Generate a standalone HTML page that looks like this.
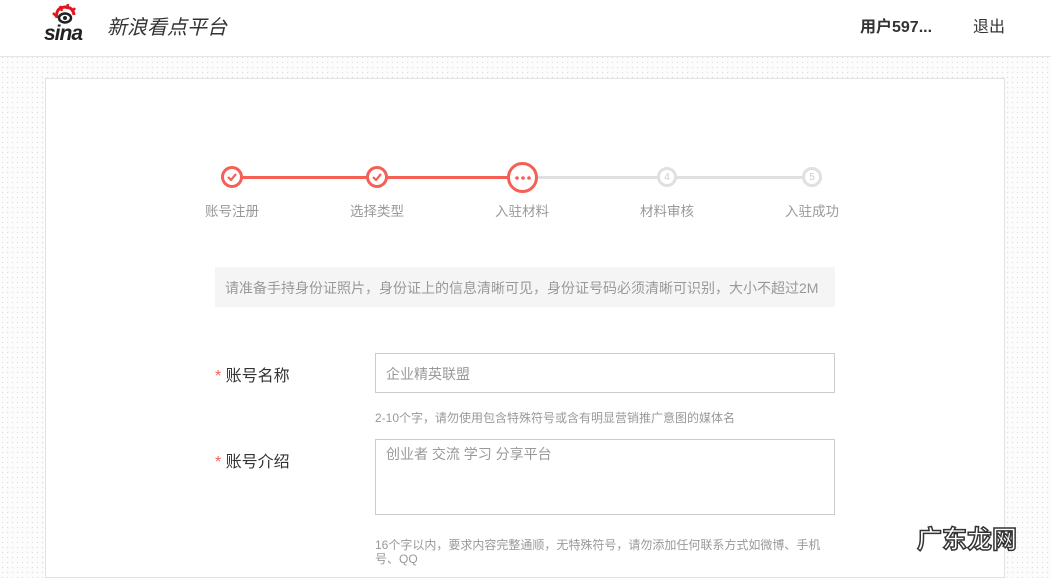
<!DOCTYPE html>
<html><head><meta charset="utf-8"><style>
*{margin:0;padding:0;box-sizing:border-box}
body{width:1051px;height:565px;overflow:hidden;font-family:"Liberation Sans","Noto Sans CJK SC",sans-serif;background-color:#fcfcfc;background-image:radial-gradient(#dddddd 0.7px,transparent 0.8px);background-size:5px 5px;position:relative}
.hdr{position:absolute;left:0;top:0;width:1051px;height:57px;background:#fff;border-bottom:1px solid #e6e6e6}
.abs{position:absolute;white-space:nowrap}
.card{position:absolute;left:45px;top:78px;width:960px;height:500px;background:#fff;border:1px solid #e2e2e2}
.c{position:absolute;border-radius:50%;background:#fff;display:flex;align-items:center;justify-content:center}
.line{position:absolute;height:3px}
.lbl{position:absolute;top:200px;font-size:13.5px;color:#999;width:100px;text-align:center}
.in{position:absolute;border:1px solid #ccc;background:#fff;font-size:14px;color:#999;padding-left:10px}
</style></head><body>
<div class="hdr">
<svg class="abs" style="left:44px;top:3px" width="56" height="40" viewBox="0 0 56 40">
<path d="M13 15 Q11 5 21 4 Q29 4 30 12" stroke="#e3141d" stroke-width="3" fill="none"/>
<path d="M9 10 L13 14 M16 3 L18 8 M24 1 L23 6 M31 5 L28 9" stroke="#e3141d" stroke-width="2.5"/>
<ellipse cx="21" cy="15" rx="6" ry="4.5" fill="#fff" stroke="#222" stroke-width="2.5"/>
<circle cx="21" cy="15" r="2" fill="#222"/>
<text x="0" y="37" font-family="Liberation Sans" font-style="italic" font-weight="bold" font-size="21" fill="#222" letter-spacing="-1">sina</text>
</svg>
<div class="abs" style="left:107px;top:11px;font-size:20px;color:#333;font-style:italic">新浪看点平台</div>
<div class="abs" style="left:860px;top:13px;font-size:16px;font-weight:bold;color:#333">用户597...</div>
<div class="abs" style="left:973px;top:13px;font-size:16px;color:#333">退出</div>
</div>
<div class="card"></div>
<div class="line" style="left:242px;top:176px;width:270px;background:#f55f55"></div>
<div class="line" style="left:537px;top:176px;width:265px;background:#e0e0e0"></div>
<div class="c" style="left:221px;top:166px;width:22px;height:22px;border:3px solid #f55f55"><svg width="10" height="8" viewBox="0 0 10 8"><path d="M1 4 L4 7 L9 1" stroke="#f55f55" stroke-width="2.2" fill="none"/></svg></div>
<div class="c" style="left:366px;top:166px;width:22px;height:22px;border:3px solid #f55f55"><svg width="10" height="8" viewBox="0 0 10 8"><path d="M1 4 L4 7 L9 1" stroke="#f55f55" stroke-width="2.2" fill="none"/></svg></div>
<div class="c" style="left:507px;top:162px;width:31px;height:31px;border:3px solid #f55f55"><svg width="16" height="4" viewBox="0 0 16 4"><circle cx="2" cy="2" r="1.8" fill="#f55f55"/><circle cx="8" cy="2" r="1.8" fill="#f55f55"/><circle cx="14" cy="2" r="1.8" fill="#f55f55"/></svg></div>
<div class="c" style="left:657px;top:167px;width:20px;height:20px;border:3px solid #e0e0e0;color:#ccc;font-size:10px">4</div>
<div class="c" style="left:802px;top:167px;width:20px;height:20px;border:3px solid #e0e0e0;color:#ccc;font-size:10px">5</div>
<div class="lbl" style="left:182px">账号注册</div>
<div class="lbl" style="left:327px">选择类型</div>
<div class="lbl" style="left:472px">入驻材料</div>
<div class="lbl" style="left:617px">材料审核</div>
<div class="lbl" style="left:762px">入驻成功</div>
<div class="abs" style="left:215px;top:267px;width:620px;height:40px;background:#f5f5f5;color:#999;font-size:14px;padding:11px 0 0 10px">请准备手持身份证照片，身份证上的信息清晰可见，身份证号码必须清晰可识别，大小不超过2M</div>
<div class="abs" style="left:215px;top:362px;font-size:16px;color:#333"><span style="color:#f55f55">*</span> 账号名称</div>
<div class="in" style="left:375px;top:353px;width:460px;height:40px;line-height:40px">企业精英联盟</div>
<div class="abs" style="left:375px;top:409px;font-size:12px;color:#999">2-10个字，请勿使用包含特殊符号或含有明显营销推广意图的媒体名</div>
<div class="abs" style="left:215px;top:448px;font-size:16px;color:#333"><span style="color:#f55f55">*</span> 账号介绍</div>
<div class="in" style="left:375px;top:439px;width:460px;height:76px;padding-top:4px">创业者 交流 学习 分享平台</div>
<div class="abs" style="left:375px;top:538px;font-size:12px;color:#999;line-height:14px;white-space:normal;width:460px">16个字以内，要求内容完整通顺，无特殊符号，请勿添加任何联系方式如微博、手机号、QQ</div>
<div class="abs" style="left:917px;top:520px;font-size:25px;font-weight:bold;color:#fff;-webkit-text-stroke:1.5px #333">广东龙网</div>
</body></html>
